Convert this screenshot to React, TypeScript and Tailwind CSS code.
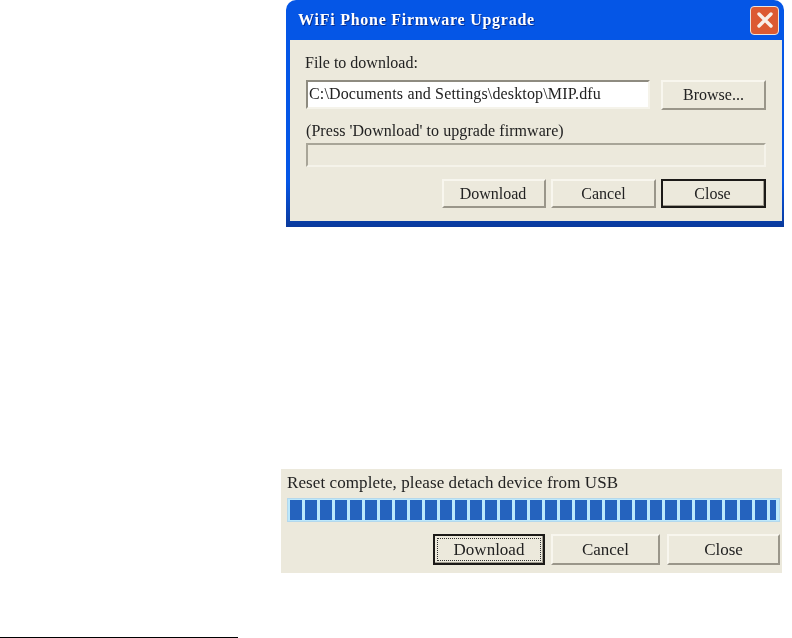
const serif = "font-['Liberation_Serif',serif]";

function XpButton({ label, className = "", kind = "normal" }: { label: string; className?: string; kind?: "normal" | "default" | "focus" }) {
  const border =
    kind === "normal"
      ? "border-t-[#f8f6ee] border-l-[#f8f6ee] border-r-[#9a968a] border-b-[#9a968a] border-2"
      : "border-2 border-[#1c1a18] shadow-[inset_-1px_-1px_0_#a09c90]";
  return (
    <div className={`flex items-center justify-center bg-[#ece9dc] text-[#222] ${border} ${className}`}>
      {kind === "focus" ? (
        <span className="flex h-full w-full items-center justify-center border border-dotted border-[#333]">{label}</span>
      ) : (
        label
      )}
    </div>
  );
}

export default function App() {
  return (
    <div className={`flex h-[638px] w-[792px] flex-col overflow-hidden bg-white ${serif} text-[16px] leading-none text-[#222]`}>
      <div className="ml-[286px] flex h-[227px] w-[498px] flex-col rounded-t-[10px] bg-gradient-to-b from-[#0556e6] from-80% to-[#0a3a9c] pb-[6px] pl-[4px] pr-[2px] blur-[0.35px]">
        <div className="flex h-[40px] shrink-0 items-center justify-between pl-[8px] pr-[3px]">
          <span className="text-[16px] font-bold tracking-[0.75px] text-white [text-shadow:1px_1px_0_#0a2f8f]">WiFi Phone Firmware Upgrade</span>
          <div className="flex h-[29px] w-[29px] items-center justify-center rounded-[4px] border border-[#e8e4e0] bg-[#dc5a32]">
            <svg width="20" height="20" viewBox="0 0 20 20">
              <path d="M4 4 L16 16 M16 4 L4 16" stroke="#f8efe8" strokeWidth="3.4" strokeLinecap="round" />
            </svg>
          </div>
        </div>
        <div className="flex flex-1 flex-col bg-[#ece9dc] pl-[16px] pr-[16px]">
          <div className="mt-[15px] -ml-px h-[16px] leading-[16px]">File to download:</div>
          <div className="mt-[9px] flex h-[30px] justify-between">
            <div className="flex h-[29px] w-[344px] items-center border-2 border-t-[#8e8b80] border-l-[#8e8b80] border-r-[#f5f3ea] border-b-[#f5f3ea] bg-white pb-[1px] pl-[1px] tracking-[0.15px]">
              C:\Documents and Settings\desktop\MIP.dfu
            </div>
            <XpButton label="Browse..." className="w-[105px]" />
          </div>
          <div className="mt-[13px] h-[16px] leading-[16px] tracking-[0.06px]">(Press 'Download' to upgrade firmware)</div>
          <div className="mt-[4px] h-[24px] border-2 border-t-[#a8a598] border-l-[#a8a598] border-r-[#f5f3ea] border-b-[#f5f3ea]" />
          <div className="mt-[12px] flex h-[29px] justify-end gap-[5px]">
            <XpButton label="Download" className="w-[104px] pr-[2px]" />
            <XpButton label="Cancel" className="w-[105px]" />
            <XpButton label="Close" className="w-[105px] pr-[2px]" kind="default" />
          </div>
        </div>
      </div>

      <div className="ml-[281px] mt-[242px] flex h-[104px] w-[501px] flex-col bg-[#ece9dc] pl-[6px] pr-[2px] text-[17px] blur-[0.35px]">
        <div className="mt-[6px] h-[16px] leading-[16px] tracking-[0.09px]">Reset complete, please detach device from USB</div>
        <div className="mt-[7px] flex h-[24px] w-[493px] gap-[3px] overflow-hidden border border-[#b4d8ec] bg-[#bce8fc] py-[1px] pl-[2px]">
          {Array.from({ length: 33 }, (_, i) => (
            <div key={i} className={`h-full shrink-0 bg-[#2563be] ${i === 32 ? "w-[6px]" : "w-[12px]"}`} />
          ))}
        </div>
        <div className="mt-[12px] flex h-[31px]">
          <XpButton label="Download" className="ml-[146px] w-[112px] p-[2px]" kind="focus" />
          <XpButton label="Cancel" className="ml-[6px] w-[109px]" />
          <XpButton label="Close" className="ml-[7px] w-[113px]" />
        </div>
      </div>

      <div className="mt-[64px] h-px w-[238px] bg-black" />
    </div>
  );
}
